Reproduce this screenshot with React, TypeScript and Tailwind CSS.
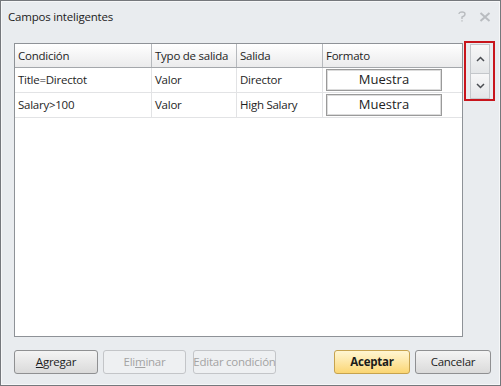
import React from 'react';

const ROWS = [
  { cond: 'Title=Directot', tipo: 'Valor', salida: 'Director' },
  { cond: 'Salary>100', tipo: 'Valor', salida: 'High Salary' },
];

const font = { fontFamily: '"Open Sans", "Noto Sans", sans-serif' };

const Btn: React.FC<{ w: string; disabled?: boolean; primary?: boolean; children: React.ReactNode }> = ({
  w,
  disabled,
  primary,
  children,
}) => {
  let cls = 'border-[#8f9092] bg-gradient-to-b from-[#f4f4f4] to-[#dadada] text-[#1c1c1c]';
  if (disabled) cls = 'border-[#c3c5c8] bg-[#eef0f2] text-[#a3a3a3]';
  if (primary) cls = 'border-[#c6a34f] bg-gradient-to-b from-[#fff6d2] to-[#fbd672] text-[#1a1a1a] font-bold';
  return (
    <div
      className={`${w} h-[24px] rounded-[3px] border flex items-center justify-center whitespace-nowrap text-[11.5px] tracking-[-0.25px] ${cls}`}
    >
      {children}
    </div>
  );
};

export default function App() {
  return (
    <div
      className="w-[501px] h-[386px] bg-[#e9ecef] flex flex-col shadow-[inset_0_0_0_1px_#75787c,inset_0_0_0_2px_#f6f7f8] text-[#1e1e1e]"
      style={font}
    >
      {/* Title */}
      <div className="h-[43px] flex items-start justify-between pl-[8px] pr-[10px] pt-[8px]">
        <span className="text-[11.5px] tracking-[-0.2px] leading-[18px] text-[#222]">Campos inteligentes</span>
        <div className="flex items-center gap-[13px] pt-[3px]">
          <svg width="8" height="11" viewBox="0 0 8 11" fill="none" stroke="#b9bcc0" strokeWidth="1.4">
            <path d="M1 3 Q1 1 4 1 Q7 1 7 3 Q7 5 4 6 L4 8" />
            <path d="M4 9.2 L4 10.6" />
          </svg>
          <svg width="12" height="10" viewBox="0 0 12 10" fill="none" stroke="#b9bcc0" strokeWidth="2">
            <path d="M1.5 1 L10.5 9 M10.5 1 L1.5 9" />
          </svg>
        </div>
      </div>

      {/* Table + side buttons */}
      <div className="flex pl-[14px]">
        <div className="w-[449px] h-[294px] border border-[#8e9297] bg-white flex flex-col text-[11.5px] tracking-[-0.25px]">
          <div className="grid grid-cols-[137px_85px_86px_1fr] h-[24px] border-b border-[#a4a7ab] bg-gradient-to-b from-[#ffffff] to-[#ebebec]">
            {['Condición', 'Typo de salida', 'Salida', 'Formato'].map((h, i) => (
              <div
                key={h}
                className={`pl-[3px] flex items-center whitespace-nowrap overflow-hidden ${i < 3 ? 'border-r border-[#b6b9bd]' : ''}`}
              >
                {h}
              </div>
            ))}
          </div>
          {ROWS.map((r) => (
            <div
              key={r.cond}
              className="grid grid-cols-[137px_85px_86px_1fr] h-[25px] border-b border-[#e2e3e5]"
            >
              <div className="pl-[3px] flex items-center border-r border-[#e2e3e5]">{r.cond}</div>
              <div className="pl-[3px] flex items-center border-r border-[#e2e3e5]">{r.tipo}</div>
              <div className="pl-[3px] flex items-center border-r border-[#e2e3e5]">{r.salida}</div>
              <div className="pl-[3px] flex items-center">
                <div className="w-[116px] h-[22px] border border-[#9a9a9a] shadow-[inset_0_0_0_1px_#dcdcdc] flex items-center justify-center text-[13px] tracking-[0px] text-[#222]">
                  Muestra
                </div>
              </div>
            </div>
          ))}
        </div>

        <div className="ml-[1px] mt-[-2px] w-[31px] h-[60px] border-2 border-[#c8151c] pl-[4px] pt-[1px]">
          <div className="w-[20px] h-[30px] border border-[#c4c7cb] bg-gradient-to-b from-[#f7f7f8] to-[#e4e6e8] flex items-center justify-center">
            <svg width="9" height="6" viewBox="0 0 9 6" fill="none" stroke="#4a4d52" strokeWidth="1.5">
              <path d="M1 5 L4.5 1.5 L8 5" />
            </svg>
          </div>
          <div className="w-[20px] h-[25px] border border-t-0 border-[#c4c7cb] bg-gradient-to-b from-[#f7f7f8] to-[#e4e6e8] flex items-center justify-center">
            <svg width="9" height="6" viewBox="0 0 9 6" fill="none" stroke="#4a4d52" strokeWidth="1.5">
              <path d="M1 1 L4.5 4.5 L8 1" />
            </svg>
          </div>
        </div>
      </div>

      {/* Bottom buttons */}
      <div className="flex items-center pl-[14px] pt-[13px]">
        <Btn w="w-[84px]">
          <span>
            <span className="underline">A</span>gregar
          </span>
        </Btn>
        <div className="ml-[5px]">
          <Btn w="w-[83px]" disabled>
            <span>
              Eli<span className="underline">m</span>inar
            </span>
          </Btn>
        </div>
        <div className="ml-[7px]">
          <Btn w="w-[83px]" disabled>
            Editar condición
          </Btn>
        </div>
        <div className="ml-[58px]">
          <Btn w="w-[76px]" primary>
            Aceptar
          </Btn>
        </div>
        <div className="ml-[5px]">
          <Btn w="w-[76px]">Cancelar</Btn>
        </div>
      </div>
    </div>
  );
}
